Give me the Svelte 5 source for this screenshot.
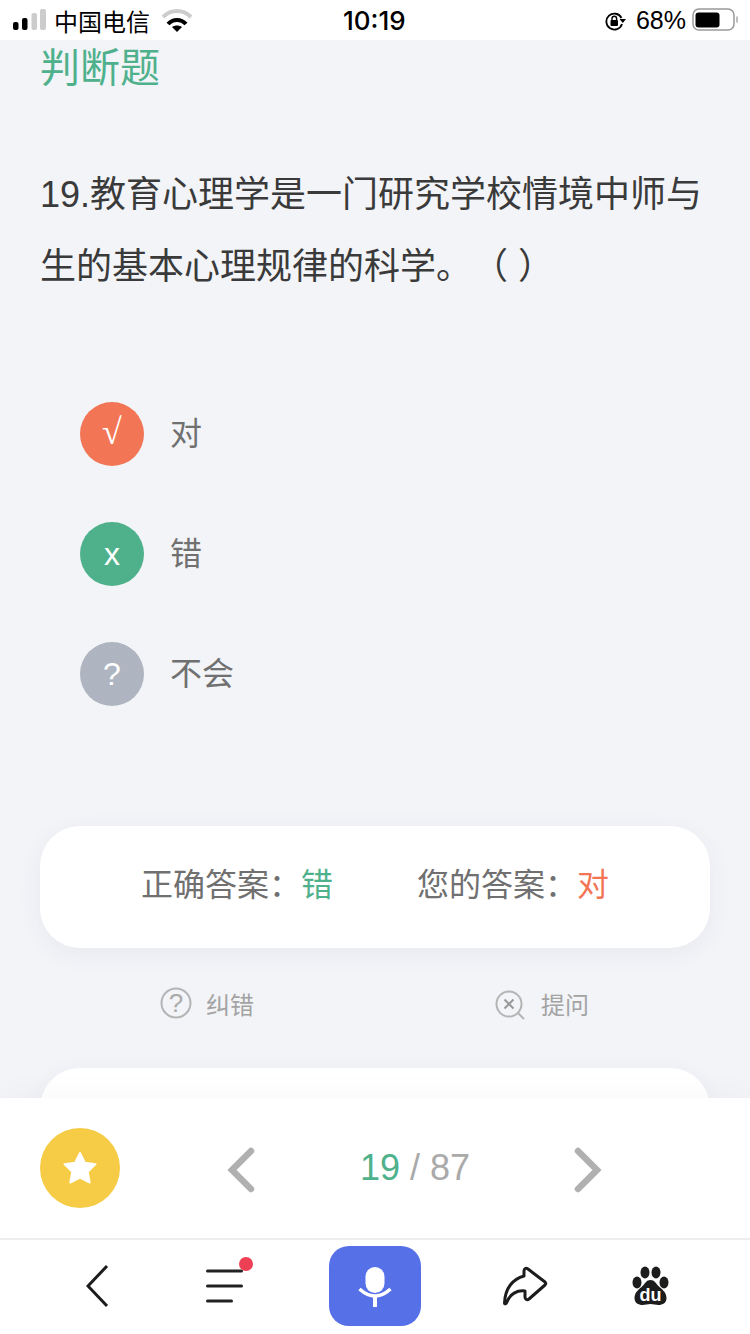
<script lang="ts">
  const options = [
    { mark: '√', label: '对', tone: 'right' },
    { mark: 'x', label: '错', tone: 'wrong' },
    { mark: '?', label: '不会', tone: 'unknown' }
  ];
</script>

<div class="page">
  <header class="status">
    <svg class="signal" width="34" height="22" viewBox="0 0 34 22">
      <rect x="0" y="13" width="5.500" height="8" rx="2" fill="#000" />
      <rect x="9" y="9" width="5.500" height="12" rx="2" fill="#000" />
      <rect x="18.500" y="4" width="5.500" height="17" rx="2" fill="#ccc" />
      <rect x="27" y="0" width="6" height="21" rx="2" fill="#ccc" />
    </svg>
    <span class="carrier">中国电信</span>
    <svg class="wifi" width="30" height="24" viewBox="0 0 30 24">
      <path d="M1 9C9 1 21 1 29 9" fill="none" stroke="#ccc" stroke-width="4" />
      <path d="M6 16C11 10.500 19 10.500 24 16" fill="none" stroke="#000" stroke-width="4" />
      <path d="M10 19C13 17 17 17 20 19L15 24Z" fill="#000" />
    </svg>
    <span class="time">10:19</span>
    <svg class="lock" width="22" height="22" viewBox="0 0 22 22">
      <path d="M16.500 9A8 8 0 1 0 17 15" fill="none" stroke="#000" stroke-width="1.800" />
      <path d="M14.500 10h6.500l-3.200 4z" fill="#000" />
      <rect x="5.500" y="11" width="7.500" height="6" rx="1" fill="#000" />
      <path d="M7 11.500V9.500a2.300 2.300 0 0 1 4.600 0v2" fill="none" stroke="#000" stroke-width="1.400" />
    </svg>
    <span class="pct">68%</span>
    <svg class="battery" width="46" height="24" viewBox="0 0 46 24">
      <rect x="1" y="1" width="41" height="21" rx="6" fill="none" stroke="#999" stroke-width="1.500" />
      <rect x="3.500" y="4.500" width="24" height="15" rx="3" fill="#000" />
      <path d="M45 8.500v6" fill="none" stroke="#aaa" stroke-width="1.500" />
    </svg>
  </header>

  <main class="content">
    <h2 class="kind">判断题</h2>
    <p class="question">19.教育心理学是一门研究学校情境中师与生的基本心理规律的科学。（ ）</p>

    <ul class="options">
      {#each options as opt (opt.label)}
        <li class="option">
          <span class="mark {opt.tone}">{opt.mark}</span>
          <span class="label">{opt.label}</span>
        </li>
      {/each}
    </ul>

    <section class="answer card">
      <span>正确答案：<b class="green">错</b></span>
      <span>您的答案：<b class="orange">对</b></span>
    </section>

    <div class="actions">
      <span class="action">
        <svg width="32" height="32" viewBox="0 0 32 32">
          <circle cx="16" cy="16" r="14.500" fill="none" stroke="#b4b4b4" stroke-width="2" />
          <text x="16" y="25" text-anchor="middle" class="qmark">?</text>
        </svg>
        纠错
      </span>
      <span class="action ask">
        <svg width="32" height="32" viewBox="0 0 32 32">
          <circle cx="15" cy="15" r="12.500" fill="none" stroke="#b4b4b4" stroke-width="2" />
          <path d="M10.500 10.500l9 9M19.500 10.500l-9 9" stroke="#999" stroke-width="2" />
          <path d="M24 24l6 6" stroke="#b4b4b4" stroke-width="2" />
        </svg>
        提问
      </span>
    </div>

    <section class="next card"></section>
  </main>

  <section class="pager">
    <button class="star" aria-label="收藏">
      <svg width="36" height="33" viewBox="0 0 36 34">
        <path d="M18 2l5 10 11 1.500-8 8 2 11L18 27.500 8 32.500l2-11-8-8L13 12z" fill="#fff" stroke="#fff" stroke-width="2" stroke-linejoin="round" />
      </svg>
    </button>
    <svg class="chev" width="30" height="48" viewBox="0 0 30 48">
      <path d="M25 5L6 24l19 19" fill="none" stroke="#b0b0b0" stroke-width="6.500" stroke-linecap="round" />
    </svg>
    <div class="count"><span class="green">19</span> / 87</div>
    <svg class="chev" width="30" height="48" viewBox="0 0 30 48">
      <path d="M4 5l19 19L4 43" fill="none" stroke="#b0b0b0" stroke-width="6.500" stroke-linecap="round" />
    </svg>
  </section>

  <nav class="toolbar">
    <svg width="24" height="44" viewBox="0 0 24 44">
      <path d="M21 2L2 22l19 20" fill="none" stroke="#1c1c1c" stroke-width="3" />
    </svg>
    <span class="menu">
      <svg width="40" height="34" viewBox="0 0 40 34">
        <path d="M2.500 2h34M2.500 17h34M2.500 32h24" fill="none" stroke="#222" stroke-width="3" stroke-linecap="round" />
      </svg>
      <i class="dot"></i>
    </span>
    <button class="mic" aria-label="语音">
      <svg width="40" height="44" viewBox="0 0 40 44">
        <rect x="10.500" y="3" width="19" height="26" rx="9.500" fill="#fff" />
        <path d="M4.500 25Q20 39 35.500 25" fill="none" stroke="#fff" stroke-width="3.500" />
        <path d="M20 32v11" stroke="#fff" stroke-width="4" />
      </svg>
    </button>
    <svg width="46" height="40" viewBox="0 0 46 40">
      <path d="M2.500 37C3 22 11 13 22 10V5c0-2.500 2-3.500 4-2l17 13c1 1 1 2 0 3L27 33c-2 1.500-4 .5-4-2v-6C15 24 8 28 5 36c-.7 1.800-2.500 2.500-2.500 1z" fill="none" stroke="#1c1c1c" stroke-width="3" stroke-linejoin="round" />
    </svg>
    <svg width="38" height="40" viewBox="0 0 38 40">
      <ellipse cx="13" cy="6.500" rx="4.500" ry="6" fill="#1c1c1c" />
      <ellipse cx="24" cy="6.500" rx="4.500" ry="6" fill="#1c1c1c" />
      <ellipse cx="5" cy="16.500" rx="4.500" ry="6" fill="#1c1c1c" />
      <ellipse cx="32" cy="16.500" rx="4.500" ry="6" fill="#1c1c1c" />
      <path d="M18.500 14c4 0 5 3 8 6 3 3 8 6 8 12 0 5-4 7-8 7-3 0-5-1-8-1s-5 1-8 1c-4 0-8-2-8-7 0-6 5-9 8-12 3-3 4-6 8-6z" fill="#1c1c1c" />
      <text x="18.500" y="35" text-anchor="middle" class="du">du</text>
    </svg>
  </nav>
</div>

<style>
  :global(body) {
    margin: 0;
  }

  .page {
    width: 750px;
    height: 1334px;
    display: flex;
    flex-direction: column;
    overflow: hidden;
    background: #f2f4f8;
    font-family: "Liberation Sans", "Noto Sans CJK SC", sans-serif;
  }

  .status {
    flex: none;
    height: 40px;
    box-sizing: border-box;
    padding: 0 12px 0 13px;
    background: #fff;
    display: flex;
    align-items: center;
    color: #000;
    position: relative;
    z-index: 1;
  }

  .signal {
    margin-right: 7px;
  }

  .carrier {
    font: 24px "Noto Sans CJK SC", sans-serif;
    width: 96px;
  }

  .wifi {
    margin-left: 12px;
  }

  .time {
    font: 500 26px Inter, sans-serif;
    margin-left: 151px;
    width: 64px;
  }

  .lock {
    margin-left: auto;
    margin-right: 9px;
  }

  .pct {
    font: 25px "Liberation Sans", sans-serif;
    margin-right: 6px;
  }

  .content {
    flex: 1;
    min-height: 0;
    padding: 0 40px;
    box-sizing: border-box;
    font-family: "Noto Sans CJK SC", sans-serif;
  }

  .kind {
    margin: 0;
    font-size: 40px;
    font-weight: 400;
    line-height: 50px;
    color: #4fb18c;
  }

  .question {
    margin: 69px 0 0;
    font-size: 36px;
    line-height: 72px;
    color: #3a3a3a;
    font-family: "Liberation Sans", "Noto Sans CJK SC", sans-serif;
    text-spacing-trim: space-all;
  }

  .options {
    list-style: none;
    margin: 99px 0 0;
    padding: 0 0 0 40px;
    display: flex;
    flex-direction: column;
    gap: 56px;
  }

  .option {
    display: flex;
    align-items: center;
    gap: 26px;
  }

  .mark {
    width: 64px;
    height: 64px;
    border-radius: 50%;
    color: #fff;
    font: 32px/64px "Liberation Sans", sans-serif;
    text-align: center;
  }

  .right {
    background: #f27555;
    font: 36px/60px "Liberation Serif", serif;
  }

  .wrong { background: #4fb18c; }
  .unknown { background: #aeb5c0; }

  .label {
    font-size: 32px;
    color: #707070;
    padding-bottom: 6px;
  }

  .card {
    background: #fff;
    border-radius: 40px;
    box-shadow: 0 6px 24px rgba(60, 70, 90, 0.06);
  }

  .answer {
    margin-top: 120px;
    height: 122px;
    box-sizing: border-box;
    padding-bottom: 10px;
    display: flex;
    align-items: center;
    justify-content: center;
    gap: 84px;
    font-size: 32px;
    color: #707070;
  }

  .answer b {
    font-weight: 400;
  }

  .green { color: #4fb18c; }
  .orange { color: #f27555; }

  .actions {
    display: flex;
    margin-top: 38px;
    height: 34px;
    padding-left: 120px;
    gap: 240px;
  }

  .action {
    display: flex;
    align-items: center;
    gap: 14px;
    font-size: 24px;
    color: #a3a3a3;
  }

  .ask {
    gap: 15px;
  }

  .ask svg {
    margin-top: 4px;
  }

  .qmark {
    font: 26px "Liberation Sans", sans-serif;
    fill: #aaa;
  }

  .next {
    margin-top: 48px;
    height: 160px;
  }

  .pager {
    flex: none;
    height: 140px;
    box-sizing: border-box;
    background: #fff;
    display: flex;
    align-items: center;
    padding-left: 40px;
    position: relative;
    box-shadow: 0 -10px 24px rgba(0, 0, 0, 0.02);
  }

  .star {
    width: 80px;
    height: 80px;
    border: 0;
    padding: 0 0 2px;
    border-radius: 50%;
    background: #f6cb45;
    display: flex;
    align-items: center;
    justify-content: center;
    margin-right: 106px;
  }

  .chev {
    margin-top: 4px;
  }

  .count {
    width: 318px;
    text-align: center;
    font-size: 36px;
    color: #aaa;
  }

  .toolbar {
    flex: none;
    height: 96px;
    box-sizing: border-box;
    border-top: 2px solid #eee;
    background: #fff;
    padding: 0 34px 2px;
    display: grid;
    grid-template-columns: 128px 126px 174px 126px 126px;
    align-items: center;
    justify-items: center;
    position: relative;
  }

  .menu {
    position: relative;
    display: flex;
  }

  .dot {
    position: absolute;
    top: -12px;
    right: -8px;
    width: 14px;
    height: 14px;
    border-radius: 50%;
    background: #ee4055;
  }

  .mic {
    width: 92px;
    height: 80px;
    border: 0;
    padding: 0;
    border-radius: 20px;
    background: #5670e8;
    display: flex;
    align-items: center;
    justify-content: center;
  }

  .du {
    font: bold 18px "Liberation Sans", sans-serif;
    fill: #fff;
  }
</style>
